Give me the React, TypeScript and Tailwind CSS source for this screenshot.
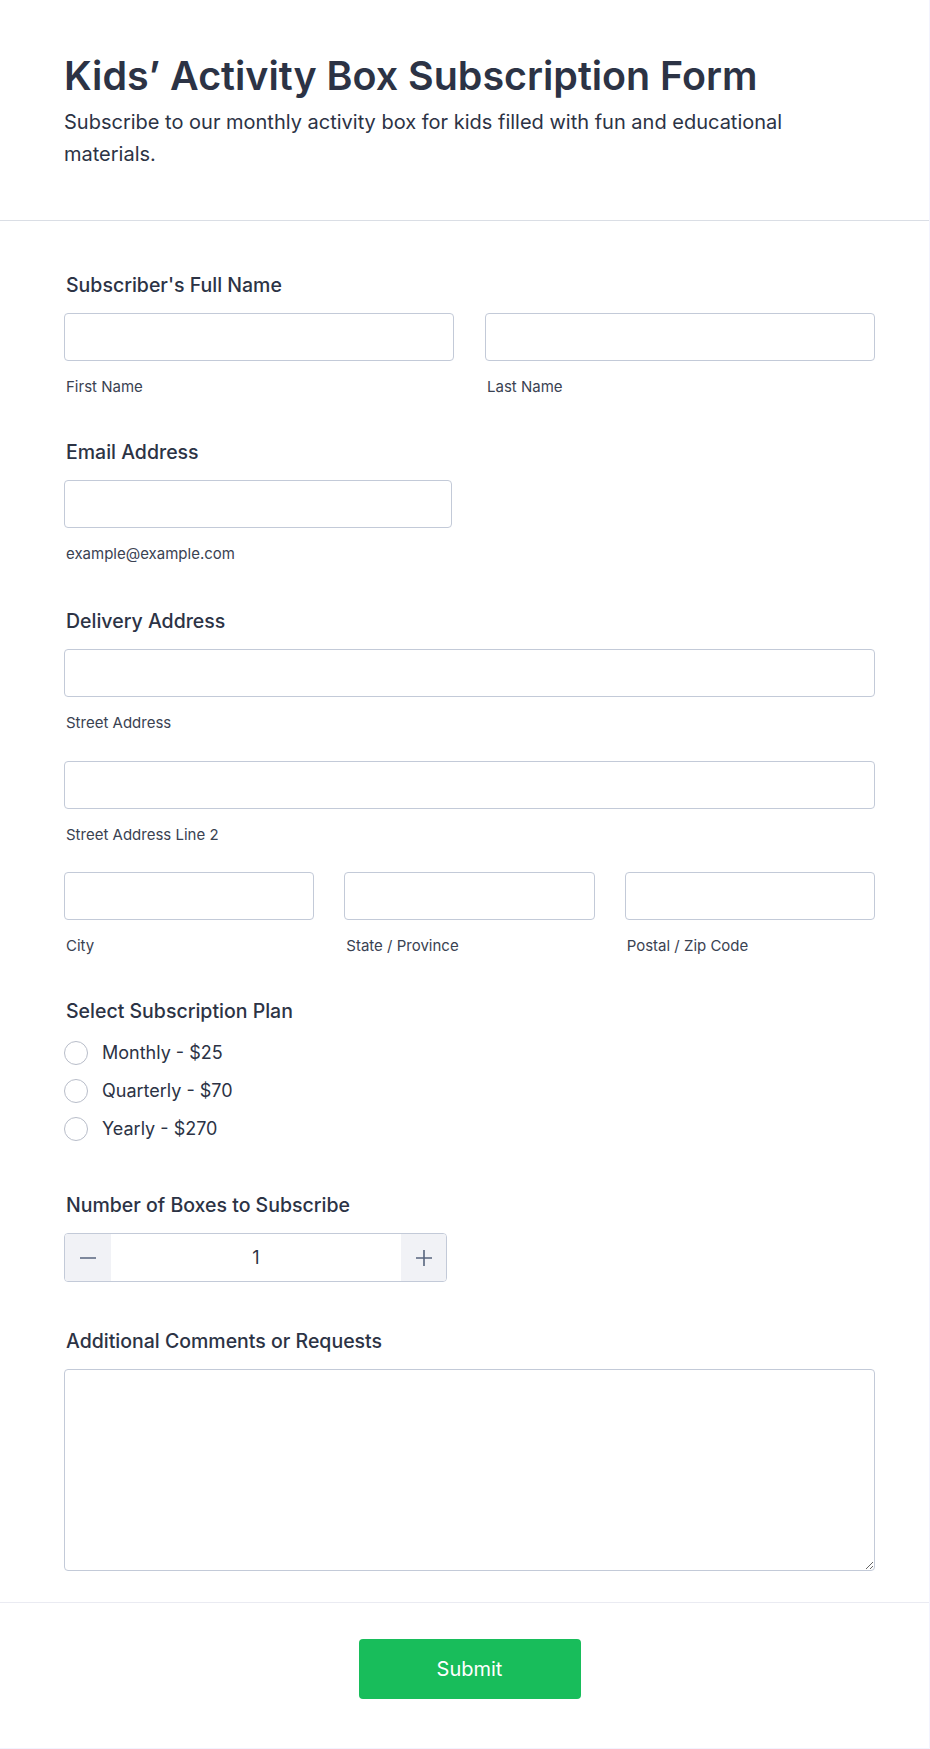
import React from 'react';

const font = { fontFamily: 'Inter, "Noto Sans", sans-serif' };

function Label({ children, className = '' }: { children: React.ReactNode; className?: string }) {
  return <div className={`pl-[2px] text-[19.5px] leading-[24px] font-medium text-[#2c3345] ${className}`}>{children}</div>;
}

function Sub({ children }: { children: React.ReactNode }) {
  return <div className="mt-4 pl-[2px] text-[15px] leading-[20px] text-[#3a4252]">{children}</div>;
}

function Field({ sub, className = '' }: { sub: string; className?: string }) {
  return (
    <div className={className}>
      <input type="text" className="block w-full h-[48px] rounded border border-[#c3cad8] bg-white px-3 outline-none" />
      <Sub>{sub}</Sub>
    </div>
  );
}

export default function App() {
  const plans = ['Monthly - $25', 'Quarterly - $70', 'Yearly - $270'];

  return (
    <div className="min-h-screen bg-[#f3f3fe]" style={font}>
      <div className="w-[929px] bg-white">
        {/* header */}
        <div className="pl-16 pr-[54px] pt-[52px] pb-[50px] border-b border-[#dadee5]">
          <h1 className="text-[39.4px] leading-[48px] font-semibold text-[#2c3345]">Kids’ Activity Box Subscription Form</h1>
          <p className="mt-[6px] text-[20px] leading-[32px] text-[#2c3345]">
            Subscribe to our monthly activity box for kids filled with fun and educational materials.
          </p>
        </div>

        {/* form body */}
        <div className="pl-16 pr-[54px] pt-[52px] pb-[31px]">
          <Label>Subscriber's Full Name</Label>
          <div className="mt-4 grid grid-cols-2 gap-[31px]">
            <Field sub="First Name" />
            <Field sub="Last Name" />
          </div>

          <Label className="mt-[43px]">Email Address</Label>
          <div className="mt-4 w-[388px]">
            <Field sub="example@example.com" />
          </div>

          <Label className="mt-[45px]">Delivery Address</Label>
          <Field sub="Street Address" className="mt-4" />
          <Field sub="Street Address Line 2" className="mt-[28px]" />
          <div className="mt-[27px] grid grid-cols-3 gap-[30px]">
            <Field sub="City" />
            <Field sub="State / Province" />
            <Field sub="Postal / Zip Code" />
          </div>

          <Label className="mt-[43px]">Select Subscription Plan</Label>
          <div className="mt-[11px] flex flex-col">
            {plans.map((p) => (
              <label key={p} className="flex h-[38px] items-center gap-[14px] cursor-pointer">
                <input type="radio" name="plan" className="peer sr-only" />
                <span className="h-6 w-6 rounded-full border border-[#b8bdc9] bg-white" />
                <span className="text-[18px] leading-[24px] text-[#2c3345]">{p}</span>
              </label>
            ))}
          </div>

          <Label className="mt-[45px]">Number of Boxes to Subscribe</Label>
          <div className="mt-4 flex h-[49px] w-[383px] overflow-hidden rounded border border-[#c3cad8]">
            <button type="button" className="flex w-[46px] items-center justify-center bg-[#f1f2f6]">
              <svg width="18" height="18" viewBox="0 0 18 18"><path d="M1 9h16" stroke="#57647e" strokeWidth="1.6" /></svg>
            </button>
            <div className="flex flex-1 items-center justify-center text-[18px] text-[#2c3345]">1</div>
            <button type="button" className="flex w-[45px] items-center justify-center bg-[#f1f2f6]">
              <svg width="18" height="18" viewBox="0 0 18 18"><path d="M1 9h16M9 1v16" stroke="#57647e" strokeWidth="1.6" /></svg>
            </button>
          </div>

          <Label className="mt-[47px]">Additional Comments or Requests</Label>
          <textarea className="mt-4 block h-[202px] w-full rounded border border-[#c3cad8] bg-white p-3 outline-none" />
        </div>

        {/* footer */}
        <div className="flex justify-center border-t border-[#eaebf2] pl-16 pr-[54px] pt-[36px] pb-[49px]">
          <button type="button" className="h-[60px] w-[222px] rounded bg-[#18bd5b] text-[20px] font-normal text-white">
            Submit
          </button>
        </div>
      </div>
    </div>
  );
}
